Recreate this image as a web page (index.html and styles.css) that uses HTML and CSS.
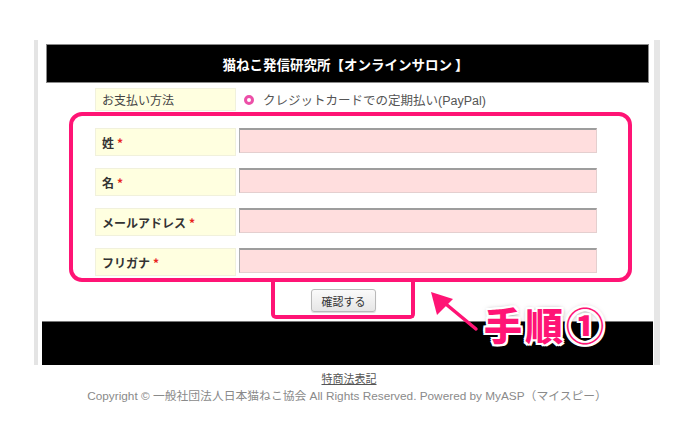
FILE: index.html
```html
<!DOCTYPE html>
<html lang="ja">
<head>
<meta charset="utf-8">
<link rel="stylesheet" href="styles.css">
</head>
<body>
<div class="page">
  <div class="frame">
    <div class="header">猫ねこ発信研究所【オンラインサロン 】</div>
    <div class="form">
      <div class="row pay">
        <div class="label normal">お支払い方法</div>
        <div class="value"><span class="radio"></span>クレジットカードでの定期払い(PayPal)</div>
      </div>
      <div class="fields">
        <div class="row">
          <div class="label">姓 <span class="req">*</span></div>
          <div class="input"></div>
        </div>
        <div class="row">
          <div class="label">名 <span class="req">*</span></div>
          <div class="input"></div>
        </div>
        <div class="row">
          <div class="label">メールアドレス <span class="req">*</span></div>
          <div class="input"></div>
        </div>
        <div class="row">
          <div class="label">フリガナ <span class="req">*</span></div>
          <div class="input"></div>
        </div>
      </div>
      <div class="actions"><button class="btn">確認する</button></div>
    </div>
    <div class="bottombar"></div>
  </div>
  <div class="footer">
    <div class="law">特商法表記</div>
    <div class="copy">Copyright © 一般社団法人日本猫ねこ協会 All Rights Reserved. Powered by MyASP（マイスピー）</div>
  </div>

  <div class="hl-big"></div>
  <div class="hl-small"></div>
  <svg class="arrow" width="60" height="50" viewBox="0 0 60 50">
    <line x1="53" y1="44" x2="18" y2="15" stroke="#ff1475" stroke-width="3.5" stroke-linecap="round"/>
    <polygon points="8,7 30,14 14,30" fill="#ff1475"/>
  </svg>
  <div class="step">手順①</div>
</div>
</body>
</html>
```

FILE: styles.css
```css
html, body {
  margin: 0;
  padding: 0;
  background: #fff;
}
body {
  font-family: "Liberation Sans", "Noto Sans CJK JP", sans-serif;
  width: 700px;
  height: 430px;
  overflow: hidden;
}
.page {
  position: relative;
  width: 700px;
  height: 430px;
  padding-top: 40px;
  box-sizing: border-box;
}
.frame {
  margin-left: 34px;
  width: 626px;
  box-sizing: border-box;
  border-left: 4px solid #e4e4e4;
  border-right: 6px solid #e6e6e6;
  padding-top: 4px;
  background: #fff;
}
.header {
  margin: 0 5px 0 8px;
  height: 39px;
  box-sizing: border-box;
  background: #000;
  border: 1px solid #8a8a8a;
  color: #fff;
  font-family: "Noto Sans CJK JP", sans-serif;
  font-weight: bold;
  font-size: 13.5px;
  display: flex;
  align-items: center;
  justify-content: center;
  padding-right: 4px;
}
.form {
  padding-left: 57px;
}
.row {
  display: flex;
  align-items: flex-start;
  gap: 3px;
  height: 28px;
}
.row.pay {
  margin-top: 5px;
  height: 23px;
}
.label {
  width: 141px;
  height: 28px;
  box-sizing: border-box;
  background: #ffffe0;
  border: 1px solid #f1f1dc;
  display: flex;
  align-items: center;
  padding-left: 6px;
  font-family: "Noto Sans CJK JP", sans-serif;
  font-size: 12px;
  font-weight: bold;
  color: #333;
}
.label.normal {
  height: 23px;
  font-weight: normal;
  color: #444;
}
.req {
  color: #e8231f;
  margin-left: 3px;
}
.value {
  display: flex;
  align-items: center;
  height: 23px;
  padding-left: 5px;
  font-size: 12.5px;
  color: #555;
}
.radio {
  width: 10px;
  height: 10px;
  box-sizing: border-box;
  border-radius: 50%;
  border: 3px solid #ec4fa8;
  background: #fff;
  margin-right: 9px;
}
.fields {
  margin-top: 17px;
  display: flex;
  flex-direction: column;
  gap: 12px;
}
.input {
  width: 358px;
  height: 25px;
  box-sizing: border-box;
  background: #ffdede;
  border: 1px solid;
  border-color: #9d9d9d #e4cfcf #e4cfcf #b0b0b0;
  border-top-width: 2px;
}
.actions {
  display: flex;
  justify-content: flex-start;
  padding-left: 216px;
  margin-top: 13px;
}
.btn {
  width: 65px;
  height: 23px;
  border: 1px solid #b9b9b9;
  border-radius: 3px;
  background: linear-gradient(#fafafa, #e6e6e6);
  box-shadow: 0 1px 1px rgba(0,0,0,0.15);
  font-family: "Noto Sans CJK JP", sans-serif;
  font-size: 11px;
  color: #333;
  padding: 0;
}
.bottombar {
  margin: 9px 1px 0 4px;
  height: 44px;
  background: #000;
  border-top: 1px solid #777;
  box-sizing: border-box;
}
.footer {
  text-align: center;
  padding-top: 6px;
  padding-right: 6px;
}
.law {
  font-family: "Noto Sans CJK JP", sans-serif;
  font-size: 11px;
  line-height: 14px;
  color: #555;
  text-decoration: underline;
  padding-left: 4px;
}
.copy {
  margin-top: 3px;
  font-size: 11.8px;
  line-height: 16px;
  color: #8a8a8a;
}
.hl-big {
  position: absolute;
  left: 69px;
  top: 112px;
  width: 563px;
  height: 170px;
  box-sizing: border-box;
  border: 4px solid #ff1475;
  border-radius: 13px;
}
.hl-small {
  position: absolute;
  left: 271px;
  top: 279px;
  width: 144px;
  height: 40px;
  box-sizing: border-box;
  border: 4px solid #ff1475;
  border-top: none;
  border-radius: 0 0 5px 5px;
}
.arrow {
  position: absolute;
  left: 423px;
  top: 285px;
}
.step {
  position: absolute;
  left: 484px;
  top: 299px;
  font-family: "Noto Sans CJK JP", sans-serif;
  font-weight: 900;
  font-size: 38px;
  line-height: 50px;
  color: #ff1475;
  letter-spacing: 3px;
  text-shadow:
    2px 0 0 #fff, -2px 0 0 #fff, 0 2px 0 #fff, 0 -2px 0 #fff,
    2px 2px 0 #fff, -2px -2px 0 #fff, 2px -2px 0 #fff, -2px 2px 0 #fff,
    0 0 5px rgba(0,0,0,0.5), 1px 2px 4px rgba(0,0,0,0.4);
}
```
